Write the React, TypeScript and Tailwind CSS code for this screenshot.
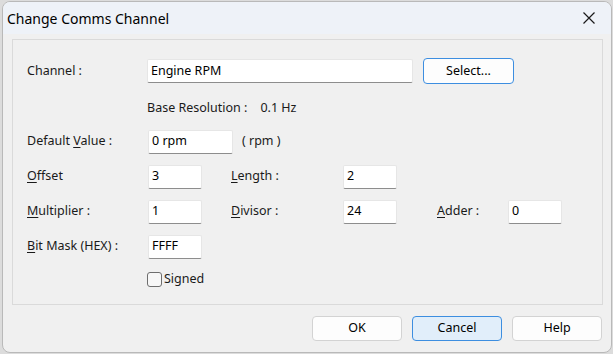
import React from "react";

const font = "font-['Segoe_UI','Noto_Sans',sans-serif]";

function Field({ value, className }: { value: string; className: string }) {
  return (
    <div
      className={`flex h-[24px] items-center rounded-[2px] border border-[#e6e6e6] border-b-[#8d8d8d] bg-white pl-[3px] text-[12.5px] text-black ${className}`}
    >
      {value}
    </div>
  );
}

function Label({ text, u, className }: { text: string; u?: number; className: string }) {
  return (
    <div className={`text-[12.5px] text-[#1a1a1a] ${className}`}>
      {u === undefined ? (
        text
      ) : (
        <>
          {text.slice(0, u)}
          <span className="underline underline-offset-2">{text[u]}</span>
          {text.slice(u + 1)}
        </>
      )}
    </div>
  );
}

function Button({ text, active }: { text: string; active?: boolean }) {
  return (
    <button
      type="button"
      className={`flex h-[25px] w-[90px] items-center justify-center rounded-[4px] border text-[12.5px] text-black ${
        active ? "border-[#3d8ee0] bg-[#e1eefa]" : "border-[#d3d3d3] bg-[#fdfdfd]"
      }`}
    >
      {text}
    </button>
  );
}

export default function App() {
  return (
    <div className={`h-[354px] w-[613px] overflow-hidden bg-[#dcdcdc] ${font}`}>
      <div className="ml-[2px] mt-[1px] flex h-[352px] w-[610px] flex-col overflow-hidden rounded-[8px] border border-[#b9b9b9] bg-[#f0f0f0]">
        {/* title bar */}
        <div className="flex h-[32px] shrink-0 items-center justify-between bg-[#eef2f8] pl-[4px] pr-[13px]">
          <span className="text-[14px] text-black">Change Comms Channel</span>
          <svg width="14" height="14" viewBox="0 0 14 14" className="mr-[2px]">
            <path d="M1.5 1.5 L12.5 12.5 M12.5 1.5 L1.5 12.5" stroke="#1a1a1a" strokeWidth="1.2" />
          </svg>
        </div>

        {/* group box */}
        <div className="ml-[9px] mt-[5px] flex h-[266px] w-[591px] flex-col border border-[#dadada] pl-[14px] pt-[18px]">
          <div className="flex items-center">
            <Label text="Channel :" className="w-[120px]" />
            <Field value="Engine RPM" className="w-[266px]" />
            <button
              type="button"
              className="ml-[10px] flex h-[26px] w-[91px] items-center justify-center rounded-[4px] border border-[#3d8ee0] bg-[#fdfdfd] text-[12.5px] text-black"
            >
              Select...
            </button>
          </div>

          <div className="mt-[15px] flex items-center pl-[120px] text-[12.5px] text-[#1a1a1a]">
            <span>Base Resolution :</span>
            <span className="ml-[13px]">0.1 Hz</span>
          </div>

          <div className="mt-[12px] flex items-center">
            <Label text="Default Value :" u={8} className="w-[121px]" />
            <Field value="0 rpm" className="w-[85px]" />
            <span className="ml-[9px] text-[12.5px] text-[#1a1a1a]">( rpm )</span>
          </div>

          <div className="mt-[11px] flex items-center">
            <Label text="Offset" u={0} className="w-[121px]" />
            <Field value="3" className="w-[54px]" />
            <Label text="Length :" u={0} className="ml-[29px] w-[112px]" />
            <Field value="2" className="w-[54px]" />
          </div>

          <div className="mt-[11px] flex items-center">
            <Label text="Multiplier :" u={0} className="w-[121px]" />
            <Field value="1" className="w-[54px]" />
            <Label text="Divisor :" u={0} className="ml-[29px] w-[112px]" />
            <Field value="24" className="w-[54px]" />
            <Label text="Adder :" u={0} className="ml-[40px] w-[71px]" />
            <Field value="0" className="w-[54px]" />
          </div>

          <div className="mt-[11px] flex items-center">
            <Label text="Bit Mask (HEX) :" u={0} className="w-[121px]" />
            <Field value="FFFF" className="w-[54px]" />
          </div>

          <div className="mt-[11px] flex items-center pl-[120px]">
            <div className="h-[15px] w-[15px] rounded-[3px] border border-[#6e6e6e] bg-[#f7f7f7]" />
            <span className="ml-[2px] text-[12.5px] text-[#1a1a1a]">Signed</span>
          </div>
        </div>

        {/* buttons */}
        <div className="mt-[11px] flex justify-end gap-[10px] pr-[9px]">
          <Button text="OK" />
          <Button text="Cancel" active />
          <Button text="Help" />
        </div>
      </div>
    </div>
  );
}
